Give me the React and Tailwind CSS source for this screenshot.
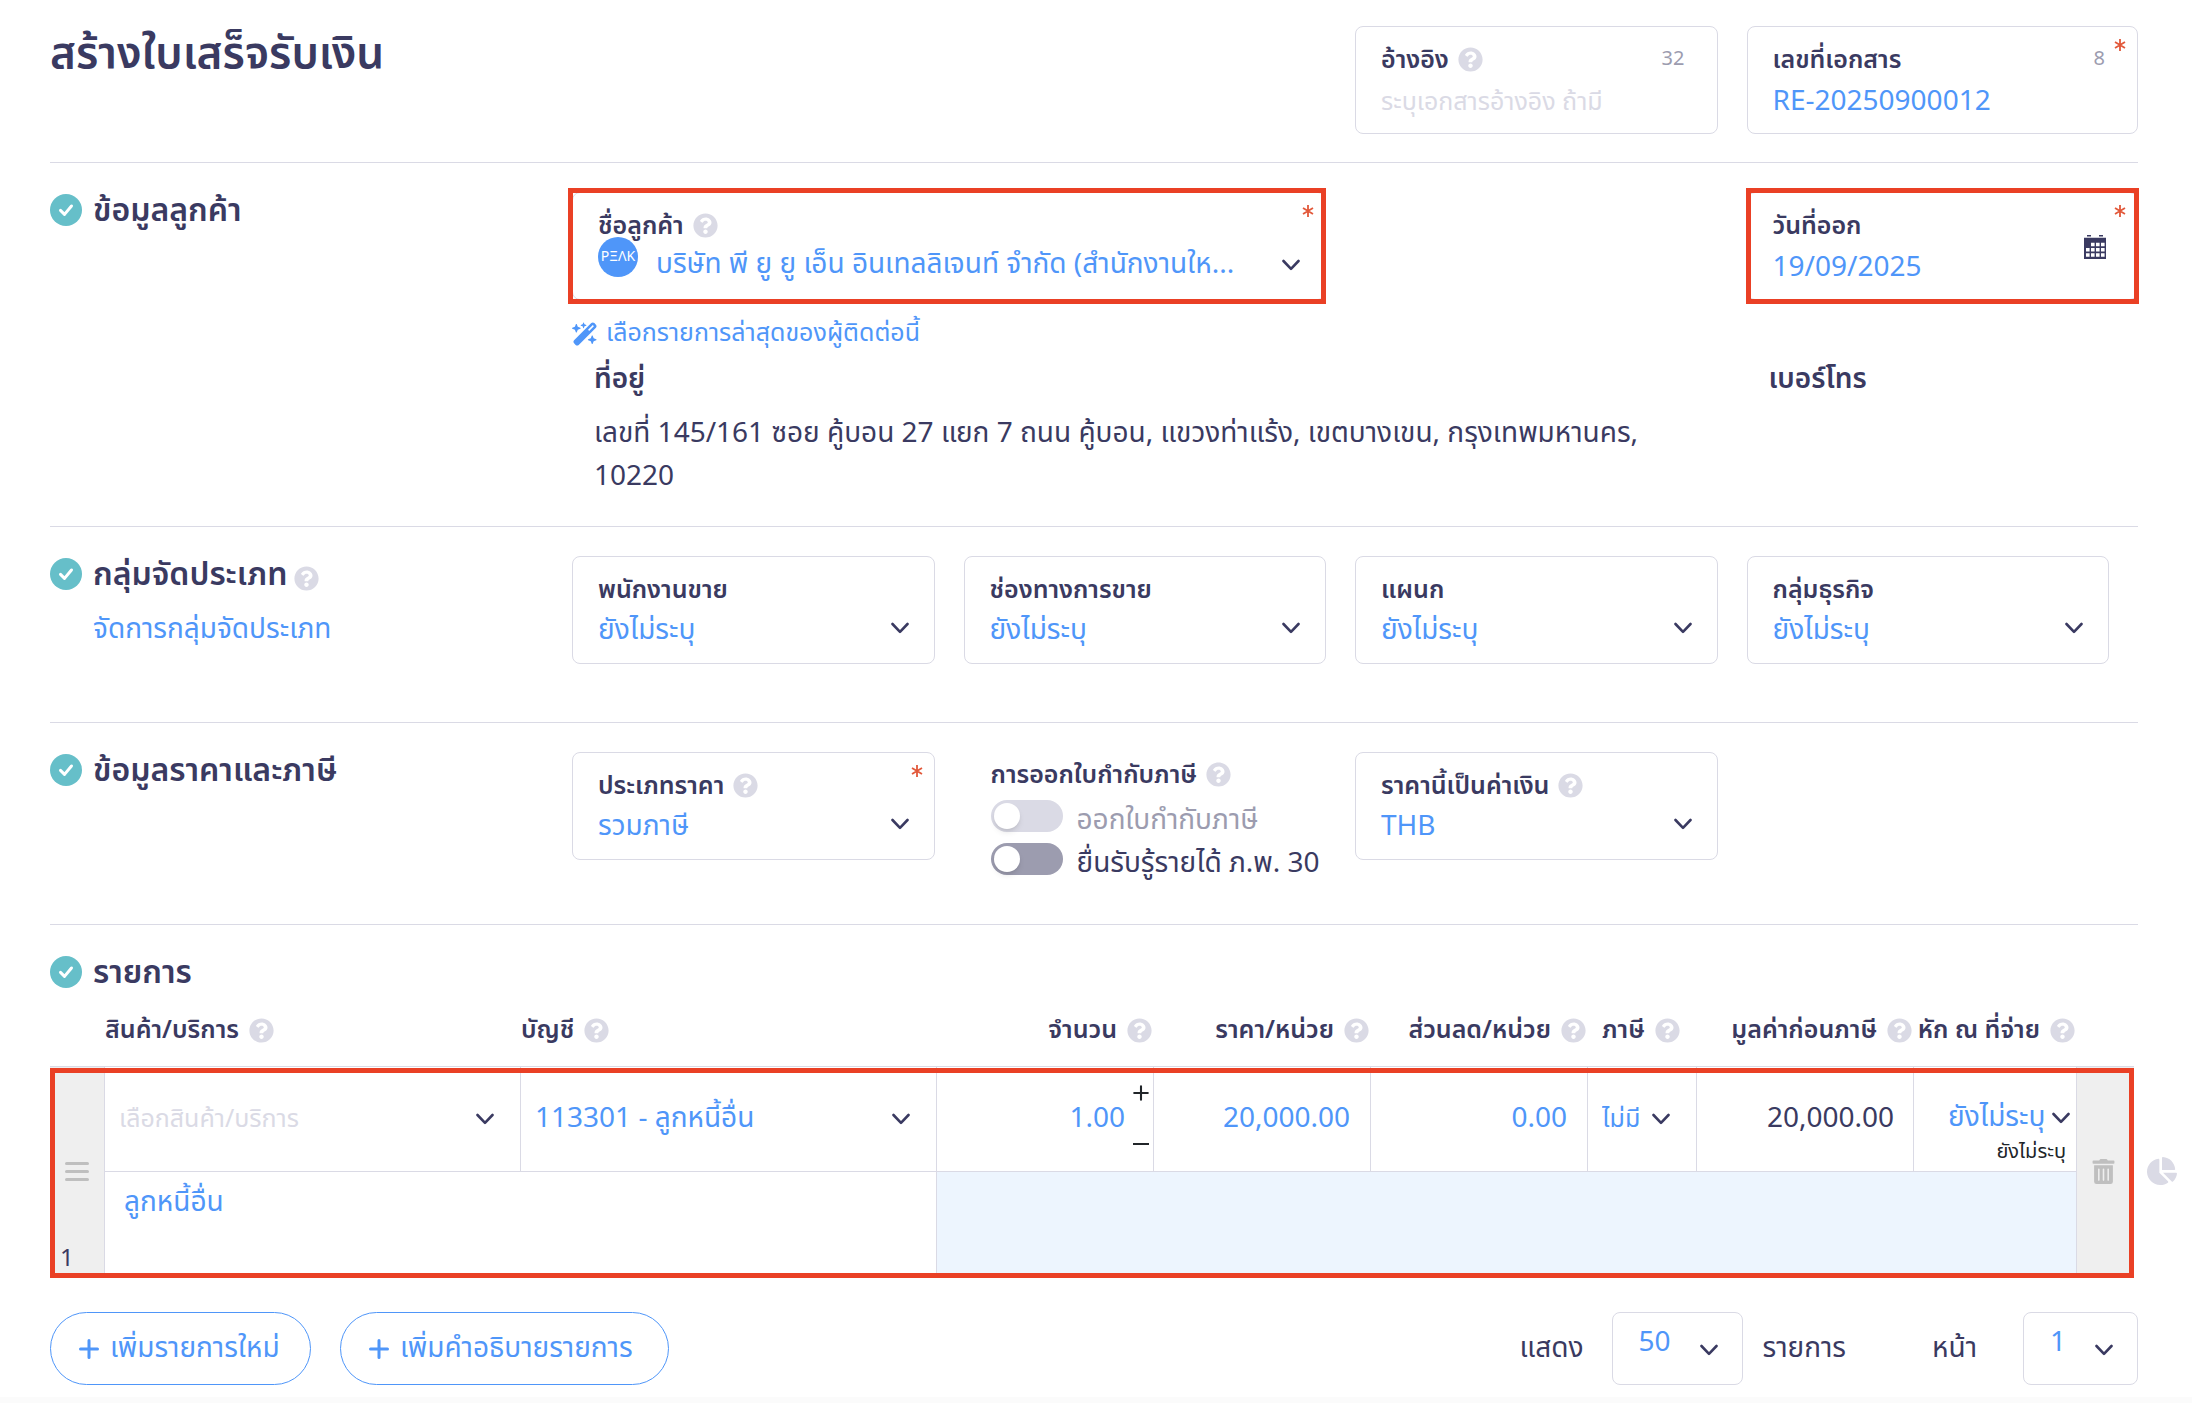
import { useId } from "react";
import { FaChartPie, FaQuestionCircle, FaTrashAlt } from "react-icons/fa";
import { FaWandMagicSparkles } from "react-icons/fa6";

function Help() {
  return (
    <button type="button" aria-label="ช่วยเหลือ" className="shrink-0">
      <FaQuestionCircle size={25} className="text-[#dadae5]" />
    </button>
  );
}

function Chevron() {
  return (
    <svg width="18" height="12" viewBox="0 0 18 12" fill="none" stroke="#3a3a61" strokeWidth="2.6" strokeLinecap="round" strokeLinejoin="round" className="pointer-events-none shrink-0">
      <path d="M1.5 2 9 9.8 16.5 2" />
    </svg>
  );
}

function Plus({ size = 20, line = 3 }) {
  return (
    <svg width={size} height={size} viewBox="0 0 20 20" stroke="currentColor" strokeWidth={line} strokeLinecap="round" className="shrink-0">
      <path d="M10 1.5v17M1.5 10h17" />
    </svg>
  );
}

function Calendar() {
  return (
    <svg width="22" height="24" viewBox="0 0 22 24">
      <path fill="#3a3a61" d="M3 0h4v1.6H3zM15 0h4v1.6h-4zM0 2.8h22V24H0z" />
      <path stroke="#fff" strokeWidth="3.6" strokeDasharray="3.6 1.4" d="M7 9.5h14" />
      <path stroke="#fff" strokeWidth="3.6" strokeDasharray="3.6 1.4" d="M2 14.8h19M2 20h19" />
    </svg>
  );
}

function Required() {
  return (
    <svg width="12" height="12" viewBox="0 0 12 12" stroke="#e2583a" strokeWidth="1.8" className="absolute top-3 right-[11px]">
      <path d="M6 0v12M1 3l10 6M11 3 1 9" />
    </svg>
  );
}

function Highlight({ className }) {
  return <div className={`pointer-events-none absolute -inset-y-1 border-5 border-[#ea4025] ${className}`} />;
}

function SectionTitle({ children, help }) {
  return (
    <div className="flex h-9 items-center gap-[11px]">
      <svg width="32" height="32" viewBox="0 0 32 32" className="shrink-0">
        <circle cx="16" cy="16" r="16" fill="#66bfc9" />
        <path d="m10.5 16.4 4 4 7-8.4" fill="none" stroke="#fff" strokeWidth="3" strokeLinecap="round" strokeLinejoin="round" />
      </svg>
      <h2 className="pt-0.5 text-[32px] leading-9 font-semibold">{children}</h2>
      {help && (
        <span className="-ml-1 flex pt-2">
          <Help />
        </span>
      )}
    </div>
  );
}

function Section({ title, help, below, className, children }) {
  return (
    <section className={`grid grid-cols-[1fr_3fr] border-t border-[#dadae5] pt-[29px] ${className}`}>
      <div>
        <SectionTitle help={help}>{title}</SectionTitle>
        {below}
      </div>
      <div className="grid grid-cols-4 gap-y-[14px]">{children}</div>
    </section>
  );
}

function Card({ id, label, help, count, required, children }) {
  return (
    <div className="relative h-[108px] rounded-lg border border-[#dadae5] px-[25px] pt-[14px]">
      <div className="flex h-9 items-center gap-[9px]">
        <label htmlFor={id} className="pt-0.5 text-[25px] leading-9 font-semibold whitespace-nowrap">
          {label}
        </label>
        {help && <Help />}
        {count && <span className="ml-auto pr-[7px] text-xl text-[#9c9caf]">{count}</span>}
      </div>
      {children}
      {required && <Required />}
    </div>
  );
}

function SelectLine({ id, label, value, className = "", markClass = "" }) {
  return (
    <div className="grid items-center">
      <select id={id} aria-label={label} className={`col-start-1 row-start-1 h-11 w-full appearance-none truncate bg-transparent pr-9 text-[28px] leading-11 text-[#4f96f9] ${className}`}>
        <option>{value}</option>
      </select>
      <span className={`pointer-events-none col-start-1 row-start-1 justify-self-end ${markClass}`}>
        <Chevron />
      </span>
    </div>
  );
}

function SelectCard({ value, ...rest }) {
  const id = useId();
  return (
    <Card id={id} {...rest}>
      <SelectLine id={id} value={value} className="pt-0.5" markClass="pb-0.5" />
    </Card>
  );
}

function InputCard({ value, placeholder, children, ...rest }) {
  const id = useId();
  return (
    <Card id={id} {...rest}>
      <input id={id} defaultValue={value} placeholder={placeholder} className="mt-[3px] h-11 w-full text-[28px] leading-11 text-[#4f96f9] placeholder:text-[25px] placeholder:text-[#dadae5]" />
      {children}
    </Card>
  );
}

function Toggle({ label, disabled }) {
  const id = useId();
  return (
    <div className="flex h-[43px] items-center gap-[14px]">
      <input
        id={id}
        type="checkbox"
        role="switch"
        disabled={disabled}
        className="flex h-8 w-[72px] shrink-0 appearance-none items-center rounded-full bg-[#9c9caf] px-[3px] before:size-[26px] before:rounded-full before:bg-white before:shadow-md disabled:bg-[#dadae5]"
      />
      <label htmlFor={id} className={`pt-2.5 text-[28px] leading-9 whitespace-nowrap ${disabled ? "text-[#9c9caf]" : ""}`}>
        {label}
      </label>
    </div>
  );
}

const columns = [
  { label: "สินค้า/บริการ", width: 416 },
  { label: "บัญชี", width: 416 },
  { label: "จำนวน", width: 217, end: true },
  { label: "ราคา/หน่วย", width: 217, end: true },
  { label: "ส่วนลด/หน่วย", width: 217, end: true },
  { label: "ภาษี", width: 109, start: true },
  { label: "มูลค่าก่อนภาษี", width: 217, end: true },
  { label: "หัก ณ ที่จ่าย", width: 163, end: true },
];

function NumberInput({ label, value }) {
  return <input aria-label={label} defaultValue={value} className="h-11 w-full min-w-0 text-right text-[28px] leading-11 text-[#4f96f9]" />;
}

function ItemsTable() {
  return (
    <div className="relative min-w-0 flex-1">
      <table className="w-full table-fixed border-separate border-spacing-0">
        <colgroup>
          <col style={{ width: 55 }} />
          {columns.map((c) => (
            <col key={c.label} style={{ width: c.width }} />
          ))}
          <col style={{ width: 57 }} />
        </colgroup>
        <thead>
          <tr className="h-[54px] align-top">
            <td />
            {columns.map((c) => (
              <th key={c.label} scope="col" className="p-0">
                <div className={`flex h-9 items-center gap-[10px] ${c.end ? "justify-end pr-[2px]" : ""} ${c.start ? "pl-[14px]" : ""}`}>
                  <span className="text-[25px] leading-9 font-semibold whitespace-nowrap">{c.label}</span>
                  <Help />
                </div>
              </th>
            ))}
            <td />
          </tr>
        </thead>
        <tbody className="[&_td]:border-[#dadae5] [&_td]:p-0">
          <tr className="h-[105px]">
            <td rowSpan={2} className="border-t border-r bg-[#efefef]">
              <div className="relative flex h-[208px] items-center justify-center">
                <button type="button" aria-label="จัดลำดับ" className="flex flex-col gap-[5px]">
                  <span className="h-[3px] w-6 rounded-full bg-[#bfbfbf]" />
                  <span className="h-[3px] w-6 rounded-full bg-[#bfbfbf]" />
                  <span className="h-[3px] w-6 rounded-full bg-[#bfbfbf]" />
                </button>
                <span className="absolute bottom-0.5 left-[10px] text-2xl leading-7">1</span>
              </div>
            </td>
            <td className="border-t border-r">
              <div className="pr-[26px] pl-[14px]">
                <SelectLine label="สินค้า/บริการ" value="เลือกสินค้า/บริการ" className="text-[25px]! text-[#dadae5]!" />
              </div>
            </td>
            <td className="border-t border-r">
              <div className="pr-[26px] pl-[14px]">
                <SelectLine label="บัญชี" value="113301 - ลูกหนี้อื่น" />
              </div>
            </td>
            <td className="border-t border-r">
              <div className="flex h-[104px] items-center gap-2 pr-1">
                <NumberInput label="จำนวน" value="1.00" />
                <div className="flex h-full shrink-0 flex-col justify-between pt-[18px] pb-[19px] text-[#212529]">
                  <button type="button" aria-label="เพิ่มจำนวน" className="flex">
                    <Plus size={16} line={2.6} />
                  </button>
                  <button type="button" aria-label="ลดจำนวน" className="flex h-4 items-center">
                    <span className="h-[2px] w-4 bg-[#212529]" />
                  </button>
                </div>
              </div>
            </td>
            <td className="border-t border-r">
              <div className="px-5">
                <NumberInput label="ราคา/หน่วย" value="20,000.00" />
              </div>
            </td>
            <td className="border-t border-r">
              <div className="px-5">
                <NumberInput label="ส่วนลด/หน่วย" value="0.00" />
              </div>
            </td>
            <td className="border-t border-r">
              <div className="pr-[26px] pl-[14px]">
                <SelectLine label="ภาษี" value="ไม่มี" className="pr-5! text-[25px]!" />
              </div>
            </td>
            <td className="border-t border-r text-right">
              <div className="pr-[19px] text-[28px] leading-11">20,000.00</div>
            </td>
            <td className="border-t border-r">
              <div className="flex h-[104px] flex-col items-end pt-[29px] pr-1.5">
                <SelectLine label="หัก ณ ที่จ่าย" value="ยังไม่ระบุ" className="pr-6!" />
                <div className="pr-1 text-xl leading-6 text-[#212529]">ยังไม่ระบุ</div>
              </div>
            </td>
            <td rowSpan={2} className="border-t bg-[#efefef]">
              <button type="button" aria-label="ลบรายการ" className="ml-[14px] flex">
                <FaTrashAlt size={25} className="text-[#bfbfbf]" />
              </button>
            </td>
          </tr>
          <tr className="h-[104px] align-top">
            <td colSpan={2} className="border-t border-r">
              <textarea aria-label="คำอธิบายรายการ" defaultValue="ลูกหนี้อื่น" className="block h-24 w-full resize-none px-[19px] pt-[9px] text-[28px] leading-11 text-[#4f96f9]" />
            </td>
            <td colSpan={6} className="border-t border-r bg-[#edf5fe]" />
          </tr>
        </tbody>
      </table>
      <div className="pointer-events-none absolute inset-x-0 -bottom-[3px] h-[210px] border-5 border-[#ea4025]" />
    </div>
  );
}

function PageSelect({ label, value, className }) {
  return (
    <div className={`grid h-[73px] rounded-lg border border-[#dadae5] pt-2 pr-6 pl-[26px] ${className}`}>
      <select aria-label={label} className="col-start-1 row-start-1 h-11 w-full appearance-none bg-transparent text-[28px] leading-11 text-[#4f96f9]">
        <option>{value}</option>
      </select>
      <span className="pointer-events-none col-start-1 row-start-1 self-center justify-self-end pb-1.5">
        <Chevron />
      </span>
    </div>
  );
}

const pill = "flex h-[73px] items-center gap-[11px] rounded-full border border-[#4f96f9] px-7 text-[28px] whitespace-nowrap text-[#4f96f9]";

export default function App() {
  return (
    <div className="bg-white font-['Noto_Sans_Thai','Noto_Sans',sans-serif] text-[#3a3a61]">
      <form className="pr-[54px] pb-3 pl-[50px]" onSubmit={(e) => e.preventDefault()}>
        <header className="grid grid-cols-[10fr_3fr_3fr] pt-[26px] pb-7">
          <h1 className="pt-px text-[44px] leading-14 font-semibold">สร้างใบเสร็จรับเงิน</h1>
          <div className="pr-[29px]">
            <InputCard label="อ้างอิง" help count="32" placeholder="ระบุเอกสารอ้างอิง ถ้ามี" />
          </div>
          <InputCard label="เลขที่เอกสาร" count="8" required value="RE-20250900012" />
        </header>

        <Section title="ข้อมูลลูกค้า" className="pb-7">
          <div className="relative col-span-2 mr-[29px]">
            <Card id="customer" label="ชื่อลูกค้า" help required>
              <div className="pl-[58px]">
                <SelectLine id="customer" value="บริษัท พี ยู ยู เอ็น อินเทลลิเจนท์ จำกัด (สำนักงานให..." className="pr-[50px]!" />
              </div>
              <div className="absolute top-11 left-[25px] flex size-10 items-center justify-center rounded-full bg-[#4f96f9] text-sm text-white">PΞΛK</div>
            </Card>
            <Highlight className="right-0 -left-1" />
          </div>
          <div className="relative col-start-4">
            <InputCard label="วันที่ออก" required value="19/09/2025">
              <button type="button" aria-label="เลือกวันที่" className="absolute top-[42px] right-[31px]">
                <Calendar />
              </button>
            </InputCard>
            <Highlight className="-inset-x-px" />
          </div>
          <div className="col-span-3">
            <a href="#recent" className="flex h-10 items-center gap-2 text-[25px] text-[#4f96f9]">
              <FaWandMagicSparkles size={26} />
              เลือกรายการล่าสุดของผู้ติดต่อนี้
            </a>
            <div className="pr-[72px] pl-[22px]">
              <h3 className="pt-1 text-[28px] leading-11 font-semibold">ที่อยู่</h3>
              <p className="pt-[10px] text-[28px] leading-[43px]">เลขที่ 145/161 ซอย คู้บอน 27 แยก 7 ถนน คู้บอน, แขวงท่าแร้ง, เขตบางเขน, กรุงเทพมหานคร, 10220</p>
            </div>
          </div>
          <h3 className="pt-11 pl-[22px] text-[28px] leading-11 font-semibold">เบอร์โทร</h3>
        </Section>

        <Section
          title="กลุ่มจัดประเภท"
          help
          className="pb-[58px]"
          below={
            <a href="#groups" className="mt-4 ml-[43px] block text-[28px] leading-11 text-[#4f96f9]">
              จัดการกลุ่มจัดประเภท
            </a>
          }
        >
          {["พนักงานขาย", "ช่องทางการขาย", "แผนก", "กลุ่มธุรกิจ"].map((label) => (
            <div key={label} className="pr-[29px]">
              <SelectCard label={label} value="ยังไม่ระบุ" />
            </div>
          ))}
        </Section>

        <Section title="ข้อมูลราคาและภาษี" className="pb-11">
          <div className="pr-[29px]">
            <SelectCard label="ประเภทราคา" help required value="รวมภาษี" />
          </div>
          <div className="pt-1 pl-[27px]">
            <div className="mb-0.5 flex h-9 items-center gap-[9px]">
              <span className="pt-0.5 text-[25px] leading-9 font-semibold whitespace-nowrap">การออกใบกำกับภาษี</span>
              <Help />
            </div>
            <Toggle label="ออกใบกำกับภาษี" disabled />
            <Toggle label="ยื่นรับรู้รายได้ ภ.พ. 30" />
          </div>
          <div className="pr-[29px]">
            <SelectCard label="ราคานี้เป็นค่าเงิน" help value="THB" />
          </div>
        </Section>

        <section className="border-t border-[#dadae5] pt-[29px]">
          <SectionTitle>รายการ</SectionTitle>
          <div className="mt-[22px] -mr-[39px] flex items-end">
            <ItemsTable />
            <div className="flex h-[209px] items-center pl-[13px]">
              <button type="button" aria-label="สัดส่วน">
                <FaChartPie size={30} className="text-[#dadae5]" />
              </button>
            </div>
          </div>
        </section>

        <footer className="mt-[37px] flex items-center">
          <button type="button" className={`min-w-[261px] ${pill}`}>
            <Plus />
            เพิ่มรายการใหม่
          </button>
          <button type="button" className={`ml-[29px] min-w-[329px] ${pill}`}>
            <Plus />
            เพิ่มคำอธิบายรายการ
          </button>
          <span className="mr-7 ml-auto text-[28px]">แสดง</span>
          <PageSelect label="จำนวนต่อหน้า" value="50" className="w-[131px]" />
          <span className="mr-[86px] ml-5 text-[28px]">รายการ</span>
          <span className="mr-[46px] text-[28px]">หน้า</span>
          <PageSelect label="หน้า" value="1" className="w-[115px]" />
        </footer>
      </form>
      <div className="h-1.5 bg-[#fbfbfb]" />
    </div>
  );
}
